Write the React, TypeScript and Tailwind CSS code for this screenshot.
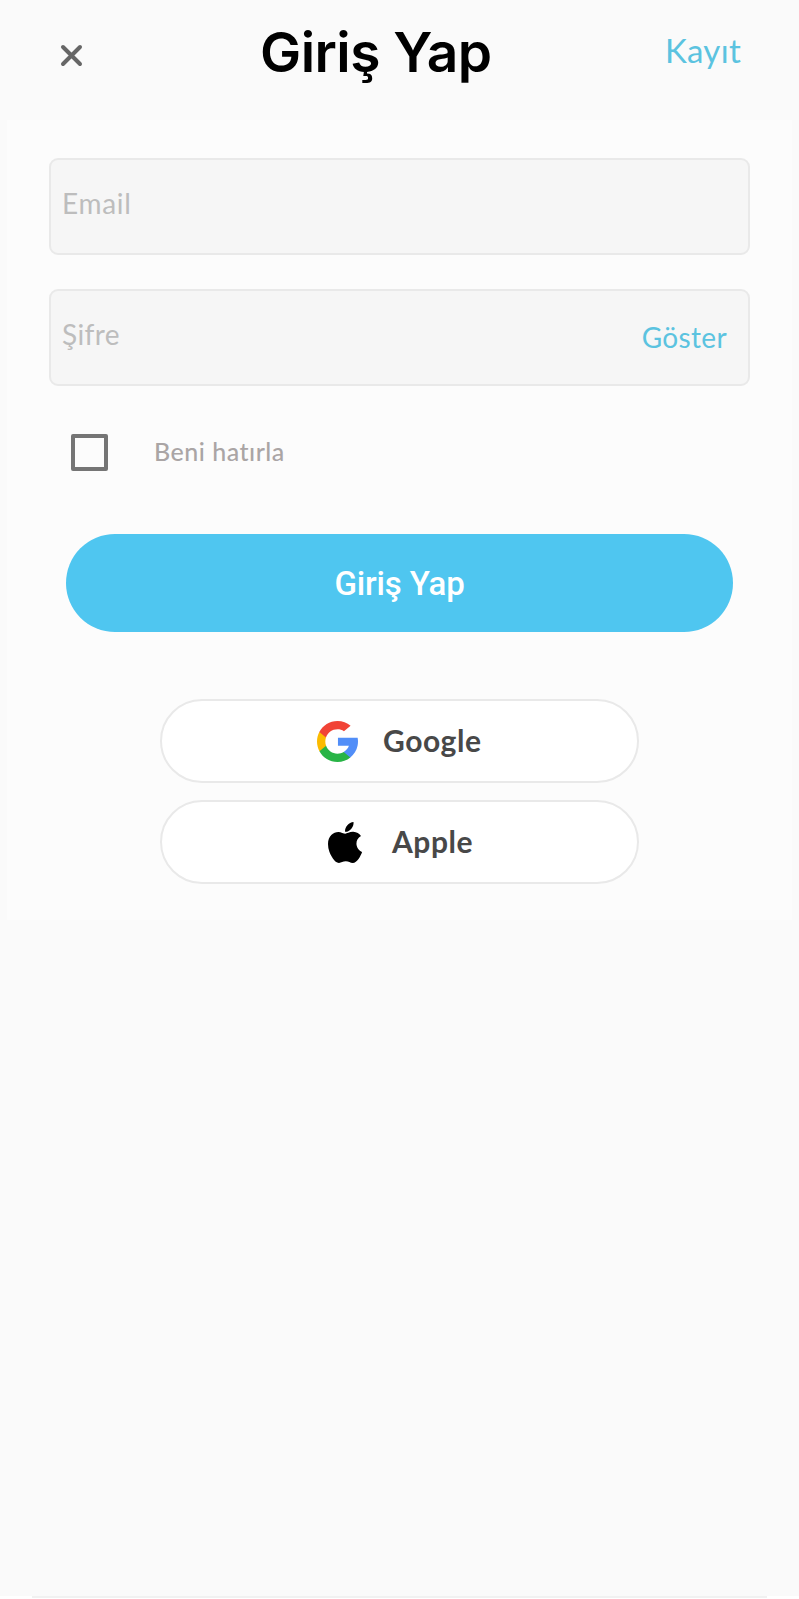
import React from "react";

const G = () => (
  <svg viewBox="0 0 512 512" className="h-[41px] w-[41px]">
    <path fill="#FBBB00" d="M113.47,309.408L95.648,375.94l-65.139,1.378C11.042,341.211,0,299.9,0,256c0-42.451,10.324-82.483,28.624-117.732h0.014l57.992,10.632l25.404,57.644c-5.317,15.501-8.215,32.141-8.215,49.456C103.821,274.792,107.225,292.797,113.47,309.408z" />
    <path fill="#518EF8" d="M507.527,208.176C510.467,223.662,512,239.655,512,256c0,18.328-1.927,36.206-5.598,53.451c-12.462,58.683-45.025,109.925-90.134,146.187l-0.014-0.014l-73.044-3.727l-10.338-64.535c29.932-17.554,53.324-45.025,65.646-77.911h-136.89V208.176h138.887L507.527,208.176L507.527,208.176z" />
    <path fill="#28B446" d="M416.253,455.624l0.014,0.014C372.396,490.901,316.666,512,256,512c-97.491,0-182.252-54.491-225.491-134.681l82.961-67.91c21.619,57.698,77.278,98.771,142.53,98.771c28.047,0,54.323-7.582,76.87-20.818L416.253,455.624z" />
    <path fill="#F14336" d="M419.404,58.936l-82.933,67.896c-23.335-14.586-50.919-23.012-80.471-23.012c-66.729,0-123.429,42.957-143.965,102.724l-83.397-68.276h-0.014C71.23,56.123,157.06,0,256,0C318.115,0,375.068,22.126,419.404,58.936z" />
  </svg>
);

const Apple = () => (
  <svg viewBox="4 32 376 448" preserveAspectRatio="none" className="h-[41px] w-[34px]">
    <path d="M318.7 268.7c-.2-36.7 16.4-64.4 50-84.8-18.8-26.9-47.2-41.7-84.7-44.6-35.5-2.8-74.3 20.7-88.5 20.7-15 0-49.4-19.7-76.4-19.7C63.3 141.2 4 184.8 4 273.5q0 39.3 14.4 81.2c12.8 36.7 59 126.7 107.2 125.2 25.2-.6 43-17.9 75.8-17.9 31.8 0 48.3 17.9 76.4 17.9 48.6-.7 90.4-82.5 102.6-119.3-65.2-30.7-61.7-90-61.7-91.9zm-56.6-164.2c27.3-32.4 24.8-61.9 24-72.5-24.1 1.4-52 16.4-67.9 34.9-17.5 19.8-27.8 44.3-25.6 71.9 26.1 2 49.9-11.4 69.5-34.3z" />
  </svg>
);

export default function App() {
  return (
    <div className="flex h-[1599px] w-[799px] flex-col overflow-hidden bg-[#fafafa] font-['Lato',sans-serif] [font-variant-ligatures:none]">
      <header className="flex h-[120px] shrink-0 items-start">
        <button aria-label="Kapat" className="ml-[60px] mt-[44px] h-[23px] w-[23px]">
          <svg viewBox="0 0 23 23" className="h-[23px] w-[23px]" fill="none" stroke="#666" strokeWidth="4" strokeLinecap="round">
            <path d="M3 3L20 20M20 3L3 20" />
          </svg>
        </button>
        <h1 className="ml-[177px] mt-[17px] w-[232px] whitespace-nowrap font-['Inter',sans-serif] text-[55px] font-semibold leading-[70px] tracking-[-0.55px] text-black">Giriş Yap</h1>
        <a className="ml-[173px] mt-[28px] whitespace-nowrap text-[33px] leading-[44px] tracking-[0.3px] text-[#5bc3e0]">Kayıt</a>
      </header>
      <main className="mx-[7px] flex h-[800px] shrink-0 flex-col items-center bg-[#fcfcfc]">
        <div className="mt-[38px] flex h-[97px] w-[701px] shrink-0 items-start rounded-[9px] border-2 border-[#e9e9e9] bg-[#f6f6f6] pl-[11px] pt-[23px]">
          <span className="text-[28px] leading-[40px] tracking-[0.7px] text-[#bdbdbd]">Email</span>
        </div>
        <div className="mt-[34px] flex h-[97px] w-[701px] shrink-0 items-start justify-between rounded-[9px] border-2 border-[#e9e9e9] bg-[#f6f6f6] pl-[11px] pr-[21px] pt-[23px]">
          <span className="text-[28px] leading-[40px] tracking-[0.4px] text-[#bdbdbd]">Şifre</span>
          <span className="mt-[3px] text-[28px] leading-[40px] tracking-[0.35px] text-[#5bc3e0]">Göster</span>
        </div>
        <div className="mt-[47px] flex h-[37px] w-[657px] shrink-0 items-center">
          <div className="mt-px h-[37px] w-[37px] shrink-0 rounded-[2px] border-4 border-[#757575]" />
          <span className="ml-[46px] text-[25px] font-medium leading-[37px] tracking-[0.5px] text-[#aaa5a5]">Beni hatırla</span>
        </div>
        <button className="mt-[64px] h-[98px] w-[667px] shrink-0 rounded-full bg-[#4fc6f0] pt-[1px] font-['Roboto',sans-serif] text-[33px] font-medium tracking-[-0.15px] text-white">Giriş Yap</button>
        <button className="mt-[67px] flex h-[84px] w-[479px] shrink-0 items-center rounded-full border-2 border-[#e9e9e9] bg-white pl-[155px]">
          <G />
          <span className="ml-[25px] pb-[2px] text-[30px] font-bold tracking-[0.55px] text-[#484848]">Google</span>
        </button>
        <button className="mt-[17px] flex h-[84px] w-[479px] shrink-0 items-center rounded-full border-2 border-[#e9e9e9] bg-white pl-[166px]">
          <Apple />
          <span className="ml-[30px] pb-[2px] text-[30px] font-bold tracking-[0.55px] text-[#484848]">Apple</span>
        </button>
      </main>
      <div className="mt-auto h-[3px] shrink-0 bg-white px-8">
        <div className="h-[2px] bg-[#f1f1f1]" />
      </div>
    </div>
  );
}
